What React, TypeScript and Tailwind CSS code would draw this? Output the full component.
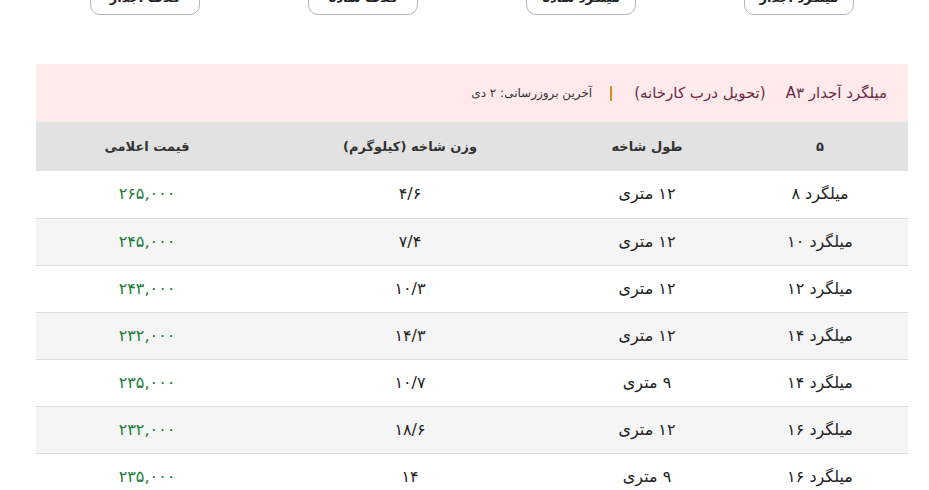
import React from "react";

const tabs = ["میلگرد آجدار", "میلگرد ساده", "کلاف ساده", "کلاف آجدار"];

const rows = [
  ["میلگرد ۸", "۱۲ متری", "۴/۶", "۲۶۵,۰۰۰"],
  ["میلگرد ۱۰", "۱۲ متری", "۷/۴", "۲۴۵,۰۰۰"],
  ["میلگرد ۱۲", "۱۲ متری", "۱۰/۳", "۲۴۳,۰۰۰"],
  ["میلگرد ۱۴", "۱۲ متری", "۱۴/۳", "۲۳۲,۰۰۰"],
  ["میلگرد ۱۴", "۹ متری", "۱۰/۷", "۲۳۵,۰۰۰"],
  ["میلگرد ۱۶", "۱۲ متری", "۱۸/۶", "۲۳۲,۰۰۰"],
  ["میلگرد ۱۶", "۹ متری", "۱۴", "۲۳۵,۰۰۰"],
];

const App = () => {
  return (
    <div
      dir="rtl"
      className="h-[490px] overflow-hidden bg-white"
      style={{ fontFamily: '"DejaVu Sans", sans-serif' }}
    >
      <div className="mr-[21px] w-[872px]">
        {/* tabs, page is scrolled so only the bottoms show */}
        <div className="-mt-[21px] grid grid-cols-4">
          {tabs.map((t) => (
            <div key={t} className="flex justify-center">
              <div className="flex h-[36px] w-[110px] items-center justify-center rounded-[10px] border border-[#b5b5b5] pt-[2px] text-[13px] font-bold text-[#222]">
                {t}
              </div>
            </div>
          ))}
        </div>

        <div className="mt-[49px]">
          <div className="flex h-[58px] items-center bg-[#feeaea] pr-[21px] text-[15px] text-[#6b2a45]">
            <span>میلگرد آجدار A۳</span>
            <span className="mr-[20px]">(تحویل درب کارخانه)</span>
            <span className="mr-[22px] ml-[18px] h-[15px] w-[2px] bg-[#d98a1c]" />
            <span className="text-[12px] text-[#333]">آخرین بروزرسانی: ۲ دی</span>
          </div>

          <table className="w-full border-collapse text-center">
            <thead>
              <tr className="h-[49px] bg-[#e2e2e2] text-[13px] font-bold text-[#333]">
                <th className="w-[176px] font-bold">۵</th>
                <th className="w-[170px] font-bold">طول شاخه</th>
                <th className="w-[304px] font-bold">وزن شاخه (کیلوگرم)</th>
                <th className="font-bold">قیمت اعلامی</th>
              </tr>
            </thead>
            <tbody>
              {rows.map((r, i) => (
                <tr
                  key={i}
                  className={`h-[47px] border-b border-[#dedede] text-[16px] text-[#222] ${
                    i % 2 === 1 ? "bg-[#f5f5f5]" : "bg-white"
                  }`}
                >
                  <td>{r[0]}</td>
                  <td>{r[1]}</td>
                  <td>{r[2]}</td>
                  <td className="text-[#1c7a3a]">{r[3]}</td>
                </tr>
              ))}
            </tbody>
          </table>
        </div>
      </div>
    </div>
  );
};

export default App;
